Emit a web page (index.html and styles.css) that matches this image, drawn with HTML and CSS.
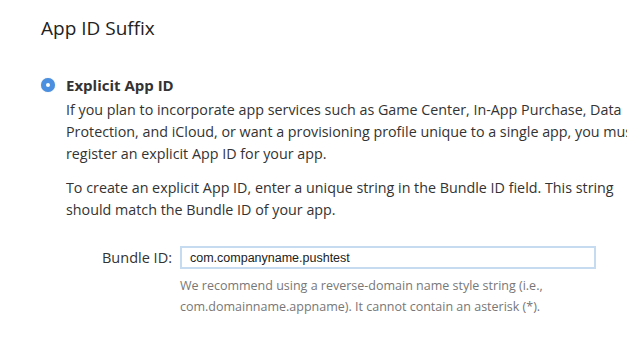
FILE: index.html
```html
<!DOCTYPE html>
<html lang="en">
<head>
    <meta charset="UTF-8">
    <title>App ID Suffix</title>
    <link rel="stylesheet" href="styles.css">
</head>
<body>
    <div class="section">
        <h1 class="title">App ID Suffix</h1>

        <div class="option">
            <span class="radio"></span>
            <div class="option-body">
                <div class="option-name">Explicit App ID</div>
                <p class="text">If you plan to incorporate app services such as Game Center, In-App Purchase, Data Protection, and iCloud, or want a provisioning profile unique to a single app, you must register an explicit App ID for your app.</p>
                <p class="text">To create an explicit App ID, enter a unique string in the Bundle ID field. This string should match the Bundle ID of your app.</p>

                <div class="field">
                    <label class="field-label" for="bundle-id">Bundle ID:</label>
                    <div class="field-input">
                        <input class="input" id="bundle-id" type="text" value="com.companyname.pushtest">
                        <p class="hint">We recommend using a reverse-domain name style string (i.e., com.domainname.appname). It cannot contain an asterisk (*).</p>
                    </div>
                </div>
            </div>
        </div>
    </div>
</body>
</html>
```

FILE: styles.css
```css
body {
    margin: 0;
    background: #ffffff;
    color: #333333;
    font-family: "Open Sans", sans-serif;
    overflow: hidden;
}
.section {
    padding: 14px 0 0 41px;
}
.title {
    margin: 0;
    font-size: 19px;
    font-weight: normal;
    line-height: 28px;
    color: #222222;
}
.option {
    display: flex;
    gap: 11px;
    margin-top: 32px;
}
.radio {
    flex: none;
    width: 14px;
    height: 14px;
    margin-top: 4px;
    border-radius: 50%;
    background: #ffffff;
    box-sizing: border-box;
    border: 5px solid #4a8fe0;
    box-shadow: 0 0 1px rgba(40, 90, 160, 0.4);
}
.option-body {
    flex: none;
    width: 580px;
}
.option-name {
    font-weight: bold;
    font-size: 15px;
    line-height: 22px;
    margin-bottom: 3px;
}
.text {
    margin: 0 0 12px;
    font-size: 14.3px;
    line-height: 22px;
}
.field {
    display: flex;
    gap: 8px;
    margin-top: 25px;
    margin-left: 36px;
}
.field-label {
    font-size: 14.5px;
    line-height: 22px;
    padding-top: 1px;
}
.field-input {
    width: 416px;
}
.input {
    display: block;
    width: 100%;
    height: 23px;
    box-sizing: border-box;
    border: 2px solid #c6daf0;
    padding: 0 8px;
    font-family: "Liberation Sans", sans-serif;
    font-size: 12.5px;
    color: #222222;
}
.hint {
    margin: 6px 0 0;
    font-size: 12.5px;
    line-height: 21px;
    color: #777777;
}
```
